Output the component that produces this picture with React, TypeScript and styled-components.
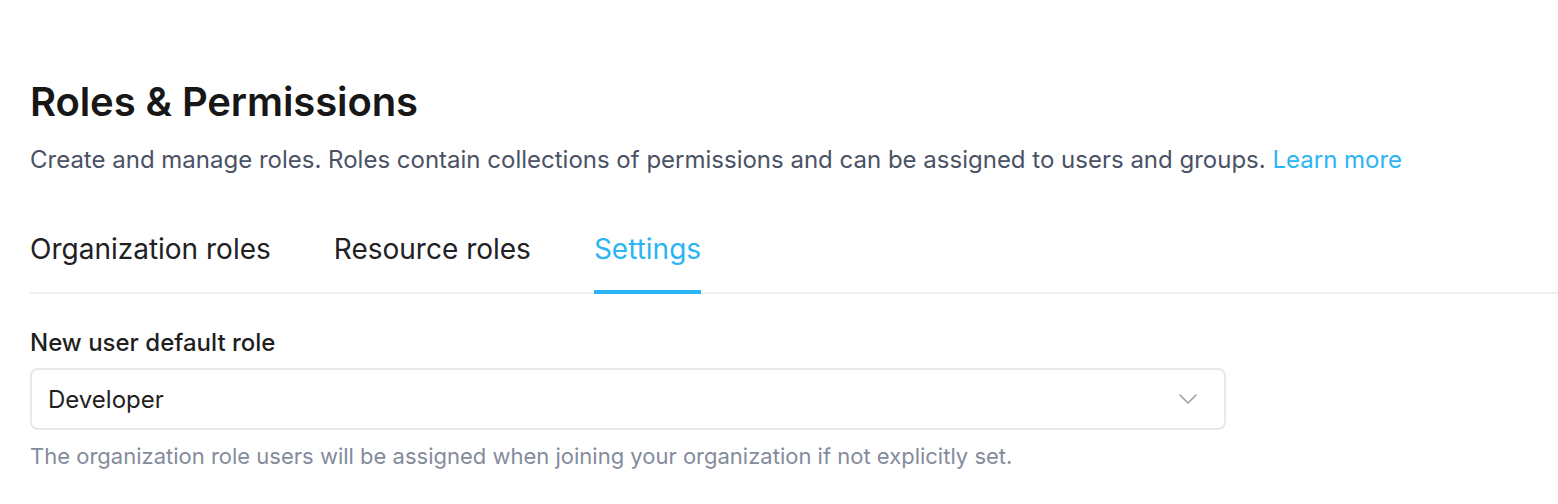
import styled, { createGlobalStyle } from "styled-components";

const GlobalStyle = createGlobalStyle`
  body {
    margin: 0;
    background: #ffffff;
    font-family: "Inter", "Noto Sans", sans-serif;
  }
`;

// Style >>>
const Page = styled.div`
  padding: 74px 0 0 30px;
`;
const Title = styled.h1`
  margin: 0;
  font-size: 40px;
  font-weight: 600;
  line-height: 56px;
  color: #171717;
  letter-spacing: -0.1px;
`;
const Subtitle = styled.p`
  margin: 14px 0 0;
  font-size: 24px;
  line-height: 32px;
  color: #4a5264;
  a {
    color: #2bb5f5;
    text-decoration: none;
  }
`;
const Tabs = styled.nav`
  display: flex;
  gap: 63px;
  margin-top: 55px;
  border-bottom: 2px solid #efefef;
`;
const Tab = styled.div<{ $active?: boolean }>`
  position: relative;
  padding-bottom: 25px;
  font-size: 28px;
  line-height: 36px;
  color: ${({ $active }) => ($active ? "#2bb5f5" : "#202124")};
  cursor: pointer;
  &::after {
    content: "";
    display: ${({ $active }) => ($active ? "block" : "none")};
    position: absolute;
    left: 0;
    right: 0;
    bottom: -2px;
    height: 4px;
    background: #2bb5f5;
  }
`;
const Field = styled.div`
  margin-top: 34px;
  width: 1196px;
`;
const Label = styled.div`
  font-size: 24px;
  font-weight: 500;
  line-height: 30px;
  color: #1f1f1f;
`;
const Select = styled.div`
  margin-top: 10px;
  height: 62px;
  box-sizing: border-box;
  display: flex;
  align-items: center;
  justify-content: space-between;
  padding: 0 26px 0 16px;
  border: 2px solid #e6e7eb;
  border-radius: 8px;
  font-size: 24px;
  color: #1f1f1f;
  cursor: pointer;
`;
const Hint = styled.div`
  margin-top: 11px;
  font-size: 22px;
  line-height: 30px;
  color: #848b9b;
`;
// Style <<<

const tabs = ["Organization roles", "Resource roles", "Settings"];

const App = () => (
  <>
    <GlobalStyle />
    <Page>
      <Title>Roles &amp; Permissions</Title>
      <Subtitle>
        Create and manage roles. Roles contain collections of permissions and
        can be assigned to users and groups. <a href="#">Learn more</a>
      </Subtitle>
      <Tabs>
        {tabs.map((t) => (
          <Tab key={t} $active={t === "Settings"}>
            {t}
          </Tab>
        ))}
      </Tabs>
      <Field>
        <Label>New user default role</Label>
        <Select>
          <span>Developer</span>
          <svg width="20" height="12" viewBox="0 0 20 12" fill="none">
            <path
              d="M2 2l8 8 8-8"
              stroke="#9aa0ad"
              strokeWidth="1.6"
              strokeLinecap="round"
              strokeLinejoin="round"
            />
          </svg>
        </Select>
        <Hint>
          The organization role users will be assigned when joining your
          organization if not explicitly set.
        </Hint>
      </Field>
    </Page>
  </>
);

export default App;
